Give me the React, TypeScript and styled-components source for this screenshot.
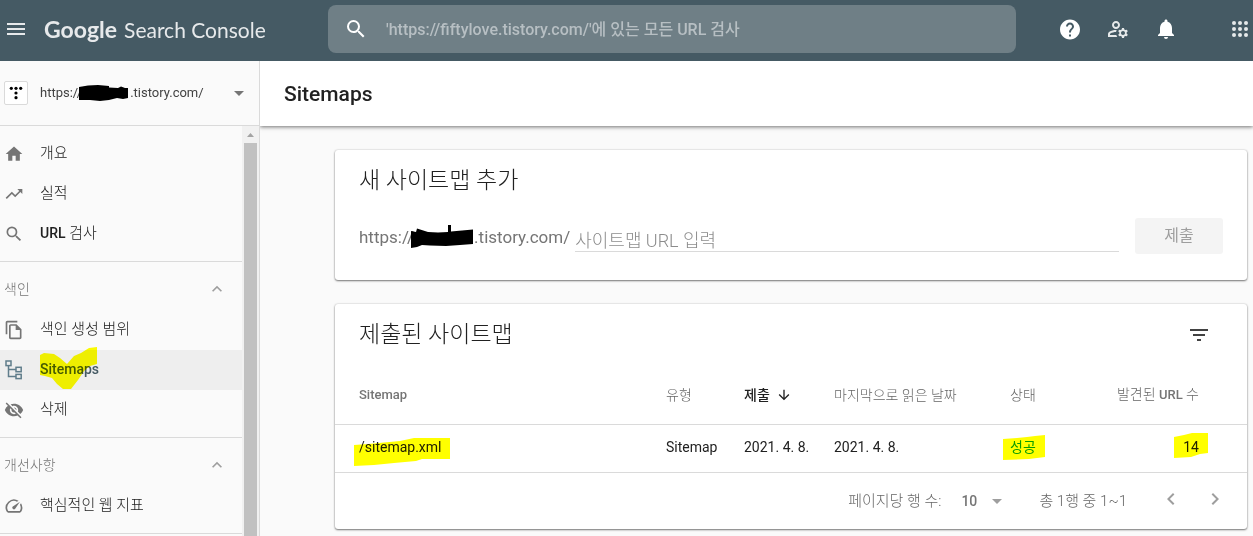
import React from "react";
import styled, { createGlobalStyle } from "styled-components";
import {
  MdMenu,
  MdSearch,
  MdHelp,
  MdOutlineManageAccounts,
  MdNotifications,
  MdArrowDropDown,
  MdHome,
  MdTrendingUp,
  MdOutlineFileCopy,
  MdVisibilityOff,
  MdOutlineSpeed,
  MdExpandLess,
  MdFilterList,
  MdArrowDownward,
  MdChevronLeft,
  MdChevronRight,
} from "react-icons/md";

const GlobalStyle = createGlobalStyle`
  * { box-sizing: border-box; }
  body {
    margin: 0;
    background: #fafafa;
    color: #212121;
    font-family: Roboto, "Noto Sans CJK KR", sans-serif;
    font-size: 14px;
    line-height: 20px;
  }
  button, input, select { font-family: inherit; }
  svg { display: block; }
`;

const Page = styled.div`
  min-height: 100vh;
  display: flex;
  flex-direction: column;
`;

const Header = styled.header`
  display: flex;
  align-items: flex-start;
  height: 61px;
  padding: 5px 1px 8px 4px;
  background: #455a64;
`;

const Brand = styled.div`
  display: flex;
  align-items: center;
  flex: 0 0 324px;
  height: 48px;
  gap: 16px;
  color: rgba(255, 255, 255, 0.87);
`;

const IconButton = styled.button<{ $tone?: string }>`
  display: flex;
  align-items: center;
  justify-content: center;
  width: 24px;
  height: 24px;
  padding: 0;
  border: 0;
  background: none;
  flex: none;
  color: ${(p) => p.$tone ?? "inherit"};
`;

const Logo = styled.a`
  display: flex;
  align-items: baseline;
  gap: 7px;
  color: inherit;
  text-decoration: none;
  font-family: Lato, sans-serif;
  font-size: 21px;
  line-height: 32px;
  white-space: nowrap;
  b { font-size: 23px; font-weight: 700; }
`;

const SearchBox = styled.label`
  display: flex;
  align-items: center;
  flex: 1;
  min-width: 0;
  height: 48px;
  padding: 0 16px;
  gap: 18px;
  border-radius: 8px;
  background: #6f7f86;
  color: #fff;
`;

const SearchInput = styled.input`
  flex: 1;
  min-width: 0;
  padding: 2px 0 0;
  border: 0;
  outline: 0;
  background: none;
  color: #fff;
  font-size: 16px;
  line-height: 24px;
  font-weight: 500;
  &::placeholder { color: #b7bfc3; opacity: 1; }
`;

const HeaderActions = styled.div`
  display: flex;
  align-items: center;
  height: 48px;
  gap: 24px;
  padding-left: 42px;
  color: #fff;
`;

const AppsSlot = styled.div`
  padding-left: 26px;
`;

const Body = styled.div`
  display: flex;
  flex: 1;
`;

const Sidebar = styled.aside`
  display: flex;
  flex-direction: column;
  flex: 0 0 260px;
  border-right: 1px solid #dadada;
`;

const Property = styled.button`
  display: flex;
  align-items: center;
  height: 65px;
  padding: 0 8px 0 4px;
  border: 0;
  border-bottom: 1px solid #dadada;
  background: none;
  color: #424242;
  font-size: 13px;
  line-height: 20px;
`;

const PropertyBadge = styled.span`
  display: flex;
  align-items: center;
  justify-content: center;
  width: 24px;
  height: 24px;
  margin-right: 12px;
  border: 1px solid #dadada;
  border-radius: 2px;
  background: #fff;
`;

const PropertyUrl = styled.span`
  display: flex;
  align-items: center;
  flex: 1;
  svg { margin-left: -4px; }
`;

const Scroller = styled.div`
  display: flex;
  flex: 1;
`;

const Nav = styled.nav`
  flex: 1;
`;

const NavGroup = styled.div`
  padding: 8px 0 7px;
  border-bottom: 1px solid #dadada;
`;

const NavHeading = styled.button`
  display: flex;
  align-items: center;
  justify-content: space-between;
  width: 100%;
  height: 40px;
  padding: 0 15px 2px 4px;
  border: 0;
  background: none;
  color: #757575;
  font-size: 14px;
  line-height: 20px;
  font-weight: 300;
`;

const NavLink = styled.a<{ $active?: boolean }>`
  display: flex;
  align-items: center;
  height: 40px;
  padding-left: 4px;
  gap: 16px;
  background: ${(p) => (p.$active ? "#eeeeee" : "transparent")};
  color: ${(p) => (p.$active ? "#455a64" : "#212121")};
  text-decoration: none;
  svg { flex: none; }
`;

const NavIcon = styled.span<{ $active?: boolean }>`
  display: flex;
  justify-content: center;
  width: 20px;
  color: ${(p) => (p.$active ? "#607d8b" : "#757575")};
`;

const NavLabel = styled.span<{ $latin?: boolean }>`
  position: relative;
  padding-bottom: 2px;
  font-size: ${(p) => (p.$latin ? "14px" : "15px")};
  font-weight: ${(p) => (p.$latin ? 500 : 300)};
  b { font-size: 14px; font-weight: 500; }
`;

const ScrollTrack = styled.div`
  display: flex;
  flex-direction: column;
  align-items: center;
  width: 17px;
  background: #f1f1f1;
`;

const ScrollArrow = styled.div`
  display: flex;
  align-items: center;
  height: 17px;
`;

const ScrollThumb = styled.div`
  flex: 1;
  width: 13px;
  background: #c1c1c1;
`;

const Main = styled.main`
  flex: 1;
  min-width: 0;
`;

const TitleBar = styled.div`
  display: flex;
  align-items: center;
  height: 65px;
  padding: 0 24px;
  background: #fff;
  box-shadow: 0 1px 4px rgba(0, 0, 0, 0.55);
  clip-path: inset(0 0 -8px 0);
`;

const Title = styled.h1`
  margin: 0;
  font-size: 21px;
  line-height: 24px;
  font-weight: 500;
`;

const Cards = styled.div`
  display: flex;
  flex-direction: column;
  gap: 24px;
  padding: 24px 6px 7px 75px;
`;

const Card = styled.section`
  border-radius: 3px;
  background: #fff;
  box-shadow: 0 1px 2px rgba(0, 0, 0, 0.5), 0 0 2px rgba(0, 0, 0, 0.2);
`;

const CardHead = styled.div`
  display: flex;
  align-items: center;
  justify-content: space-between;
  height: 62px;
  padding: 0 36px 0 24px;
`;

const CardTitle = styled.h2`
  margin: 0;
  font-size: 23px;
  line-height: 28px;
  font-weight: 300;
`;

const AddForm = styled.form`
  display: flex;
  align-items: center;
  padding: 6px 24px 26px;
`;

const UrlPrefix = styled.label`
  display: flex;
  align-items: center;
  padding-top: 2px;
  color: #757575;
  font-size: 17px;
  line-height: 24px;
  svg { margin-left: -4px; }
`;

const PathInput = styled.input`
  flex: 1;
  min-width: 0;
  height: 32px;
  margin: 0 16px 0 5px;
  padding: 9px 0 0;
  border: 0;
  border-bottom: 1px solid #dadada;
  outline: 0;
  background: none;
  font-size: 18px;
  line-height: 22px;
  font-weight: 300;
  &::placeholder { color: #8c8c8c; opacity: 1; }
`;

const SubmitButton = styled.button`
  width: 88px;
  height: 36px;
  padding: 0;
  border: 0;
  border-radius: 3px;
  background: #f4f4f4;
  color: #9e9e9e;
  font-size: 16px;
  line-height: 24px;
`;

const Table = styled.table`
  width: 100%;
  table-layout: fixed;
  border-collapse: collapse;
  th, td {
    padding: 0 0 0 24px;
    border-bottom: 1px solid #dadada;
    text-align: left;
    white-space: nowrap;
  }
`;

const Th = styled.th<{ $sorted?: boolean; $end?: boolean }>`
  height: 58px;
  color: ${(p) => (p.$sorted ? "#212121" : "#666666")};
  font-size: 14px;
  line-height: 20px;
  font-weight: ${(p) => (p.$sorted ? 500 : 300)};
  && {
    text-align: ${(p) => (p.$end ? "right" : "left")};
    padding-right: ${(p) => (p.$end ? "48px" : "0")};
  }
  b { color: #757575; font-size: 13px; font-weight: 500; }
`;

const Td = styled.td<{ $end?: boolean }>`
  height: 48px;
  font-size: 14px;
  line-height: 20px;
  && {
    text-align: ${(p) => (p.$end ? "right" : "left")};
    padding-right: ${(p) => (p.$end ? "48px" : "0")};
    padding-bottom: 2px;
  }
`;

const SortLabel = styled.span`
  display: flex;
  align-items: center;
  gap: 6px;
`;

const Marked = styled.span<{ $color?: string }>`
  position: relative;
  color: ${(p) => p.$color ?? "inherit"};
`;

const Marker = styled.svg<{ $x: number; $y: number }>`
  position: absolute;
  left: ${(p) => p.$x}px;
  top: ${(p) => p.$y}px;
  mix-blend-mode: multiply;
  pointer-events: none;
`;

const Pager = styled.div`
  display: flex;
  align-items: center;
  justify-content: flex-end;
  height: 56px;
  padding-right: 20px;
  color: #666666;
  font-size: 15px;
  line-height: 20px;
  font-weight: 300;
`;

const RowsLabel = styled.label`
  display: flex;
  align-items: center;
  gap: 20px;
`;

const SelectWrap = styled.span`
  display: flex;
  align-items: center;
  color: #9e9e9e;
`;

const RowsSelect = styled.select`
  width: 24px;
  padding: 0;
  border: 0;
  appearance: none;
  background: none;
  color: #757575;
  font-size: 14px;
  line-height: 20px;
  font-weight: 500;
`;

const Range = styled.span`
  margin: 0 32px 0 30px;
`;

const PageButtons = styled.div`
  display: flex;
  gap: 20px;
  padding-bottom: 4px;
`;

const SitemapIcon = () => (
  <svg width="18" height="20" viewBox="0 0 18 20" fill="none" stroke="currentColor" strokeWidth="1.5">
    <rect x="1" y="1" width="5" height="4.6" />
    <rect x="11" y="7.3" width="5.2" height="4.4" />
    <rect x="11" y="14.4" width="5.2" height="4.2" />
    <path d="M3.5 5.6V16.6H11M3.5 9.6H11" />
  </svg>
);

const AppsIcon = () => (
  <svg width="24" height="24" viewBox="0 0 24 24" fill="#e6e9ea">
    {[6, 12, 18].map((y) => [6, 12, 18].map((x) => <circle key={`${x}-${y}`} cx={x} cy={y} r="2" />))}
  </svg>
);

const TistoryIcon = () => (
  <svg width="14" height="14" viewBox="0 0 14 14" fill="#000">
    <circle cx="2.3" cy="2.3" r="1.6" />
    <circle cx="7" cy="2.3" r="1.6" />
    <circle cx="11.7" cy="2.3" r="1.6" />
    <circle cx="7" cy="7" r="1.6" />
    <circle cx="7" cy="11.7" r="1.6" />
  </svg>
);

const SmallScribble = () => (
  <svg width="52" height="18" viewBox="0 0 52 18">
    <path d="M1 3L10 1.5L20 1L31 2V3.5L40 4L43 2.5L47 4H50V14L45 15L39 14L31 16L22 17L12 16L1 16Z" />
  </svg>
);

const LargeScribble = () => (
  <svg width="64" height="24" viewBox="0 0 64 24">
    <path d="M1 6L6 7L7 3.5L18 7L28 7.5L38 7V0H41V6.5L52 5.5L63 4.5V19L50 20L36 21L20 20.5L12 20L7 22L1 23Z" />
  </svg>
);

const navMain = [
  { icon: <MdHome size={20} />, label: "개요" },
  { icon: <MdTrendingUp size={20} />, label: "실적" },
];

export default function App() {
  return (
    <Page>
      <GlobalStyle />
      <Header>
        <Brand>
          <IconButton aria-label="메뉴"><MdMenu size={24} /></IconButton>
          <Logo href="#"><b>Google</b><span>Search Console</span></Logo>
        </Brand>
        <SearchBox>
          <MdSearch size={24} />
          <SearchInput aria-label="URL 검사" placeholder="'https://fiftylove.tistory.com/'에 있는 모든 URL 검사" />
        </SearchBox>
        <HeaderActions>
          <IconButton aria-label="도움말"><MdHelp size={25} /></IconButton>
          <IconButton aria-label="사용자 및 권한" $tone="#e6e9ea"><MdOutlineManageAccounts size={24} /></IconButton>
          <IconButton aria-label="알림"><MdNotifications size={24} /></IconButton>
          <AppsSlot><IconButton aria-label="앱"><AppsIcon /></IconButton></AppsSlot>
        </HeaderActions>
      </Header>
      <Body>
        <Sidebar>
          <Property>
            <PropertyBadge><TistoryIcon /></PropertyBadge>
            <PropertyUrl>https://<SmallScribble />.tistory.com/</PropertyUrl>
            <MdArrowDropDown size={24} color="#757575" />
          </Property>
          <Scroller>
            <Nav>
              <NavGroup>
                {navMain.map((item) => (
                  <NavLink href="#" key={item.label}>
                    <NavIcon>{item.icon}</NavIcon>
                    <NavLabel>{item.label}</NavLabel>
                  </NavLink>
                ))}
                <NavLink href="#">
                  <NavIcon><MdSearch size={20} /></NavIcon>
                  <NavLabel><b>URL</b> 검사</NavLabel>
                </NavLink>
              </NavGroup>
              <NavGroup>
                <NavHeading>색인<MdExpandLess size={20} color="#9e9e9e" /></NavHeading>
                <NavLink href="#">
                  <NavIcon><MdOutlineFileCopy size={20} /></NavIcon>
                  <NavLabel>색인 생성 범위</NavLabel>
                </NavLink>
                <NavLink href="#" $active>
                  <NavIcon $active><SitemapIcon /></NavIcon>
                  <NavLabel $latin>
                    Sitemaps
                    <Marker $x={0} $y={-12} width="58" height="42" viewBox="0 0 58 42">
                      <path fill="#ff0" d="M0 8L4 6L14 7L20 11L27 17L34 9L41 6L49 1L57 0V17L50 19L44 24L38 33L31 42H23L17 37L12 31L5 29L0 28Z" />
                    </Marker>
                  </NavLabel>
                </NavLink>
                <NavLink href="#">
                  <NavIcon><MdVisibilityOff size={20} /></NavIcon>
                  <NavLabel>삭제</NavLabel>
                </NavLink>
              </NavGroup>
              <NavGroup>
                <NavHeading>개선사항<MdExpandLess size={20} color="#9e9e9e" /></NavHeading>
                <NavLink href="#">
                  <NavIcon><MdOutlineSpeed size={20} /></NavIcon>
                  <NavLabel>핵심적인 웹 지표</NavLabel>
                </NavLink>
              </NavGroup>
            </Nav>
            <ScrollTrack>
              <ScrollArrow>
                <svg width="7" height="4" viewBox="0 0 7 4" fill="#a3a3a3"><path d="M0 4L3.5 0L7 4Z" /></svg>
              </ScrollArrow>
              <ScrollThumb />
            </ScrollTrack>
          </Scroller>
        </Sidebar>
        <Main>
          <TitleBar><Title>Sitemaps</Title></TitleBar>
          <Cards>
            <Card>
              <CardHead><CardTitle>새 사이트맵 추가</CardTitle></CardHead>
              <AddForm>
                <UrlPrefix htmlFor="sitemap-path">https://<LargeScribble />.tistory.com/</UrlPrefix>
                <PathInput id="sitemap-path" placeholder="사이트맵 URL 입력" />
                <SubmitButton type="button" disabled>제출</SubmitButton>
              </AddForm>
            </Card>
            <Card>
              <CardHead>
                <CardTitle>제출된 사이트맵</CardTitle>
                <IconButton aria-label="필터" $tone="#424242"><MdFilterList size={24} /></IconButton>
              </CardHead>
              <Table>
                <colgroup>
                  <col />
                  <col width="78" />
                  <col width="90" />
                  <col width="176" />
                  <col width="84" />
                  <col width="177" />
                </colgroup>
                <thead>
                  <tr>
                    <Th><b>Sitemap</b></Th>
                    <Th>유형</Th>
                    <Th $sorted><SortLabel>제출<MdArrowDownward size={16} /></SortLabel></Th>
                    <Th>마지막으로 읽은 날짜</Th>
                    <Th>상태</Th>
                    <Th $end>발견된 <b>URL</b> 수</Th>
                  </tr>
                </thead>
                <tbody>
                  <tr>
                    <Td>
                      <Marked>
                        /sitemap.xml
                        <Marker $x={-5} $y={-1} width="96" height="28" viewBox="0 0 96 28">
                          <path fill="#ff0" d="M0 7L14 6L46 3L60 0H96V21H68L62 23L40 25L20 27L0 28Z" />
                        </Marker>
                      </Marked>
                    </Td>
                    <Td>Sitemap</Td>
                    <Td>2021. 4. 8.</Td>
                    <Td>2021. 4. 8.</Td>
                    <Td>
                      <Marked $color="#0b9d3a">
                        성공
                        <Marker $x={-7} $y={-4} width="42" height="25" viewBox="0 0 42 25">
                          <path fill="#ff0" d="M0 4L14 3L24 2L32 1L42 0V22L34 23L26 24L0 25Z" />
                        </Marker>
                      </Marked>
                    </Td>
                    <Td $end>
                      <Marked>
                        14
                        <Marker $x={-9} $y={-6} width="34" height="25" viewBox="0 0 34 25">
                          <path fill="#ff0" d="M0 4L10 2L18 0H34V20L26 21L17 24L0 25Z" />
                        </Marker>
                      </Marked>
                    </Td>
                  </tr>
                </tbody>
              </Table>
              <Pager>
                <RowsLabel>
                  페이지당 행 수:
                  <SelectWrap>
                    <RowsSelect defaultValue="10"><option>10</option><option>25</option></RowsSelect>
                    <MdArrowDropDown size={24} />
                  </SelectWrap>
                </RowsLabel>
                <Range>총 1행 중 1~1</Range>
                <PageButtons>
                  <IconButton aria-label="이전" $tone="#9e9e9e"><MdChevronLeft size={24} /></IconButton>
                  <IconButton aria-label="다음" $tone="#9e9e9e"><MdChevronRight size={24} /></IconButton>
                </PageButtons>
              </Pager>
            </Card>
          </Cards>
        </Main>
      </Body>
    </Page>
  );
}
